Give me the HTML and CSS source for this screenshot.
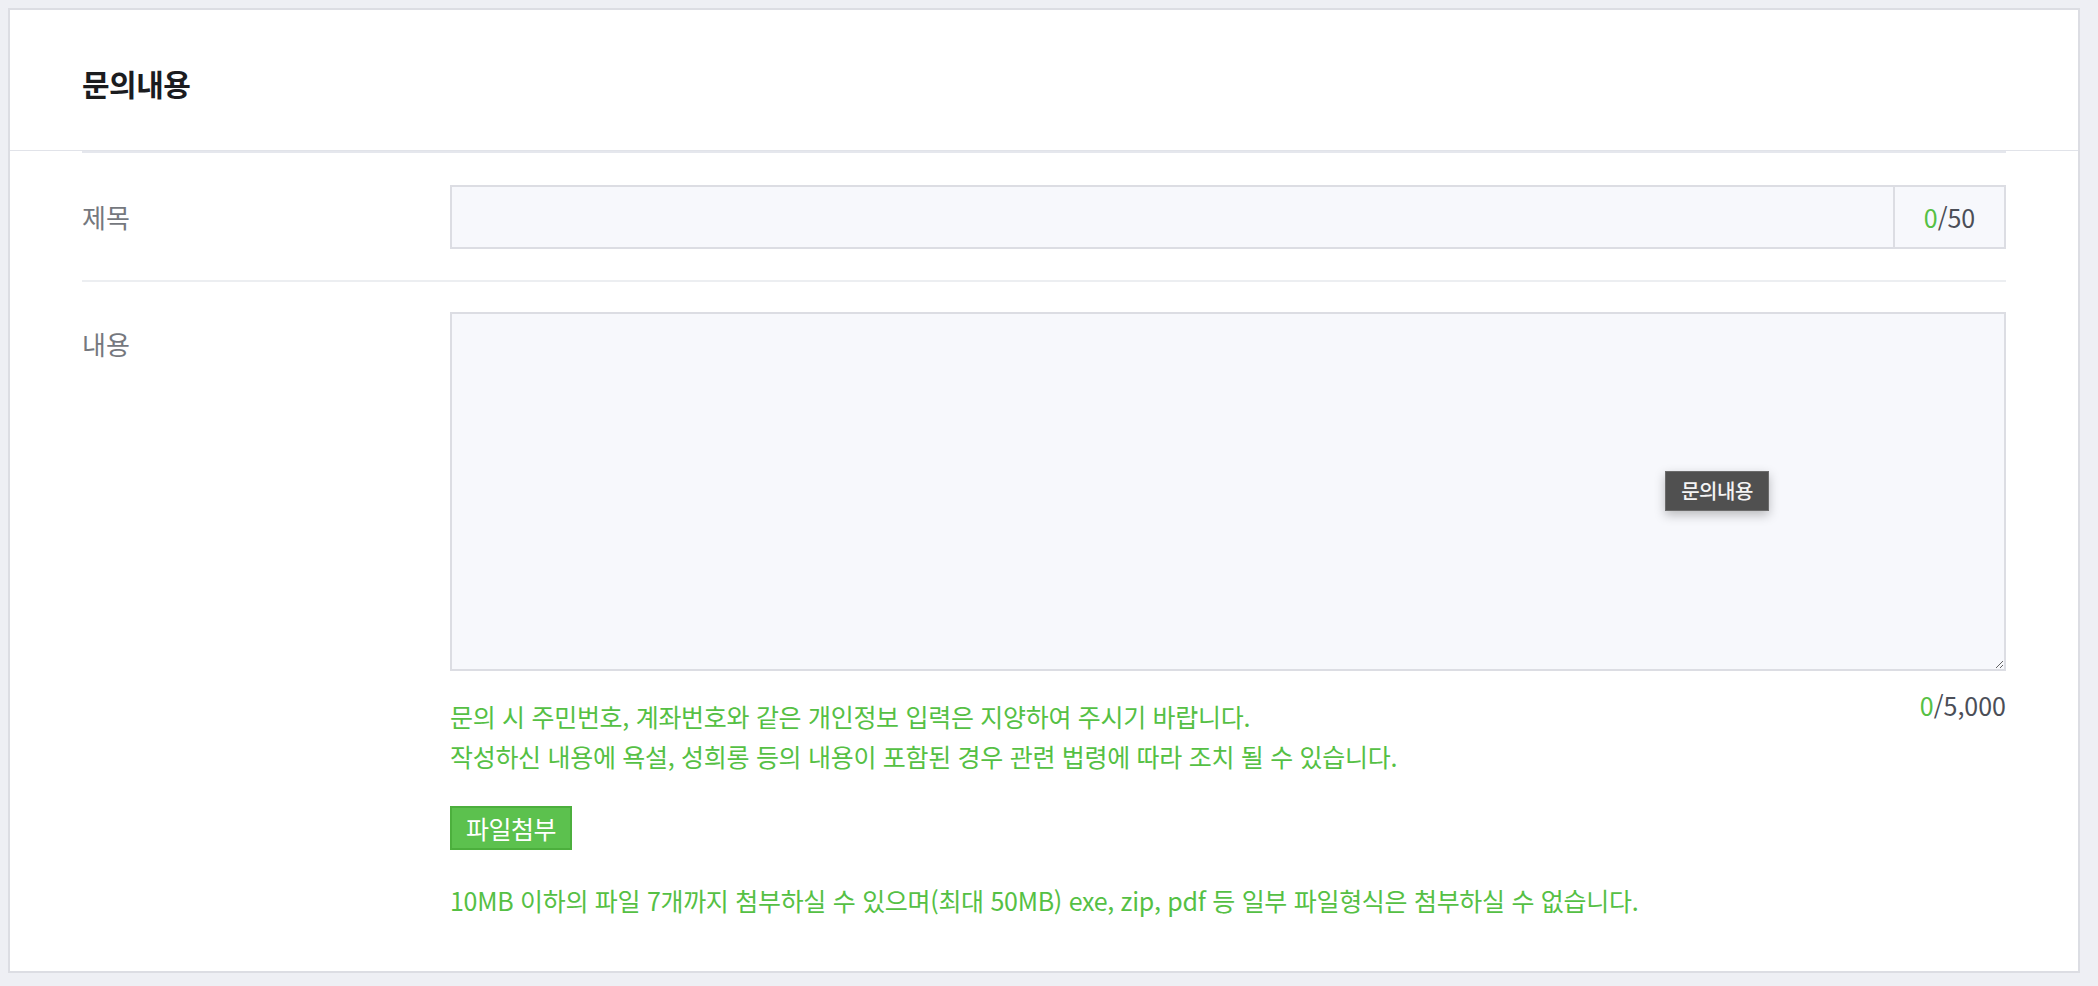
FILE: index.html
```html
<!DOCTYPE html>
<html lang="ko">
<head>
    <meta charset="UTF-8">
    <meta name="viewport" content="width=device-width, initial-scale=1.0">
    <title>문의내용</title>
    <link rel="stylesheet" href="styles.css">
</head>
<body>
    <div class="card">
        <div class="card-header">
            <h2 class="title">문의내용</h2>
        </div>
        <div class="form">
            <div class="row">
                <div class="label">제목</div>
                <div class="field">
                    <div class="input-box">
                        <input type="text" class="text-input">
                        <span class="counter"><em>0</em>/50</span>
                    </div>
                </div>
            </div>
            <div class="row last">
                <div class="label">내용</div>
                <div class="field">
                    <div class="area-wrap">
                        <textarea class="text-area"></textarea>
                        <div class="tooltip">문의내용</div>
                    </div>
                    <div class="area-info">
                        <p class="notice">문의 시 주민번호, 계좌번호와 같은 개인정보 입력은 지양하여 주시기 바랍니다.<br>작성하신 내용에 욕설, 성희롱 등의 내용이 포함된 경우 관련 법령에 따라 조치 될 수 있습니다.</p>
                        <span class="area-counter"><em>0</em>/5,000</span>
                    </div>
                    <button class="btn-file">파일첨부</button>
                    <p class="notice file-notice">10MB 이하의 파일 7개까지 첨부하실 수 있으며(최대 50MB) exe, zip, pdf 등 일부 파일형식은 첨부하실 수 없습니다.</p>
                </div>
            </div>
        </div>
    </div>
</body>
</html>
```

FILE: styles.css
```css
body {
    margin: 8px;
    background-color: #eeeff4;
    font-family: "Noto Sans CJK KR", "Noto Sans", sans-serif;
}
.card {
    width: 2072px;
    box-sizing: border-box;
    background-color: #fff;
    border: 2px solid #dcdde3;
}
.card-header {
    height: 140px;
    padding: 0 72px;
    display: flex;
    align-items: center;
    border-bottom: 1px solid #e1e3e9;
}
.title {
    margin: 6px 0 0;
    font-size: 30px;
    font-weight: 700;
    letter-spacing: -0.5px;
    color: #1b1c1f;
}
.form {
    margin: 0 72px;
    border-top: 2px solid #e5e7ed;
}
.row {
    display: flex;
    padding: 32px 0 31px;
    border-bottom: 2px solid #eceef1;
}
.row.last {
    padding: 30px 0 51px;
    border-bottom: none;
}
.label {
    width: 368px;
    flex-shrink: 0;
    line-height: 64px;
    font-size: 26px;
    color: #75787e;
}
.field {
    flex: 1;
}
.input-box {
    display: flex;
    height: 64px;
    box-sizing: border-box;
    border: 2px solid #dcdde3;
    background-color: #f7f8fc;
}
.text-input {
    flex: 1;
    border: none;
    background: transparent;
    outline: none;
}
.counter {
    width: 109px;
    border-left: 2px solid #dcdde3;
    text-align: center;
    line-height: 60px;
    font-size: 25px;
    color: #4b4e57;
}
.counter em,
.area-counter em {
    font-style: normal;
    color: #55c044;
}
.area-wrap {
    position: relative;
}
.text-area {
    display: block;
    width: 100%;
    height: 359px;
    box-sizing: border-box;
    margin: 0;
    border: 2px solid #dcdde3;
    background-color: #f7f8fc;
    outline: none;
}
.tooltip {
    position: absolute;
    left: 1215px;
    top: 159px;
    width: 104px;
    height: 40px;
    box-sizing: border-box;
    border: 1px solid #6b6b6b;
    background-color: #505050;
    color: #f4f4f4;
    font-size: 20px;
    font-weight: 500;
    line-height: 37px;
    text-align: center;
    letter-spacing: -0.5px;
    box-shadow: 0 4px 10px rgba(0, 0, 0, 0.25);
}
.area-info {
    display: flex;
    justify-content: space-between;
    align-items: flex-start;
    margin-top: 16px;
}
.area-counter {
    line-height: 36px;
    font-size: 25px;
    color: #4b4e57;
}
.notice {
    margin: 0;
    padding-top: 9px;
    font-size: 25px;
    line-height: 40px;
    letter-spacing: -0.3px;
    color: #55c044;
}
.btn-file {
    display: block;
    margin-top: 30px;
    width: 122px;
    height: 44px;
    padding: 0;
    border: 2px solid #4caf3d;
    background-color: #5cc14e;
    color: #fff;
    font-family: inherit;
    font-size: 25px;
    letter-spacing: -0.5px;
    cursor: pointer;
}
.file-notice {
    padding-top: 0;
    margin-top: 30px;
}
```
